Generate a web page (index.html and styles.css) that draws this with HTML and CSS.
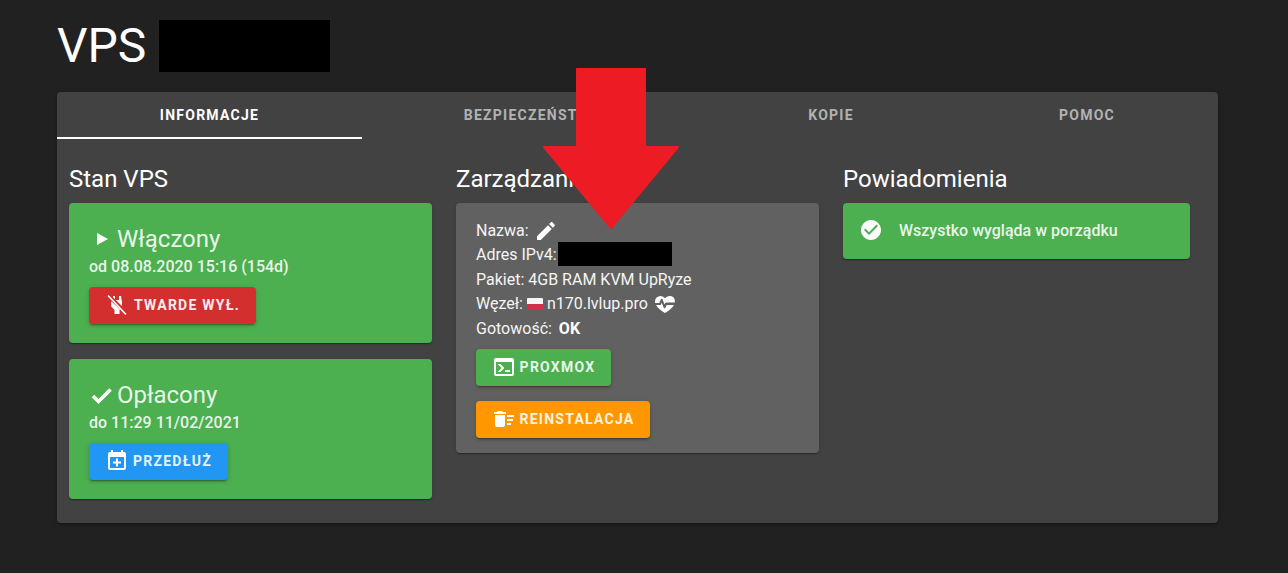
FILE: index.html
```html
<!DOCTYPE html>
<html lang="pl">
<head>
<meta charset="utf-8">
<title>VPS</title>
<link rel="stylesheet" href="styles.css">
</head>
<body>
<main class="page">
  <h1 class="title">VPS <span class="redact redact-title"></span></h1>
  <section class="panel">
    <nav class="tabs">
      <div class="tab tab-active">INFORMACJE</div>
      <div class="tab">BEZPIECZEŃSTWO</div>
      <div class="tab">KOPIE</div>
      <div class="tab">POMOC</div>
    </nav>
    <div class="columns">
      <div class="col">
        <h2 class="heading">Stan VPS</h2>
        <div class="card card-green">
          <div class="status"><svg class="status-icon" viewBox="0 0 24 24"><path d="M6 6v12l11-6z"/></svg>Włączony</div>
          <div class="sub">od 08.08.2020 15:16 (154d)</div>
          <a class="btn btn-red"><svg class="btn-icon" viewBox="0 0 24 24"><path d="M16 3h-2v4h-3.2l6.2 6.2V9zM10 3H8v1.2l2 2zM6.2 8.2V13.5L9.5 17v4h5v-4l.6-.6z"/><path d="M3 2.5 21 21.5" class="slash"/></svg>TWARDE WYŁ.</a>
        </div>
        <div class="card card-green">
          <div class="status"><svg class="status-icon" viewBox="0 0 24 24"><path d="M2 13 7.500 18.500 19.500 6.500" class="tick"/></svg>Opłacony</div>
          <div class="sub">do 11:29 11/02/2021</div>
          <a class="btn btn-blue"><svg class="btn-icon" viewBox="0 0 24 24"><path d="M19,19V8H5V19H19M16,1H18V3H19A2,2 0 0,1 21,5V19A2,2 0 0,1 19,21H5C3.89,21 3,20.1 3,19V5C3,3.89 3.89,3 5,3H6V1H8V3H16V1M11,9.5H13V12.5H16V14.5H13V17.5H11V14.5H8V12.5H11V9.5Z"/></svg>PRZEDŁUŻ</a>
        </div>
      </div>
      <div class="col">
        <h2 class="heading">Zarządzanie</h2>
        <div class="card card-grey">
          <div class="line">Nazwa: <svg class="inline-icon" viewBox="0 0 24 24"><path d="M20.71,7.04C21.1,6.65 21.1,6 20.71,5.63L18.37,3.29C18,2.9 17.35,2.9 16.96,3.29L15.12,5.12L18.87,8.87M3,17.25V21H6.75L17.81,9.93L14.06,6.18L3,17.25Z"/></svg></div>
          <div class="line">Adres IPv4:<span class="redact redact-ip"></span></div>
          <div class="line">Pakiet: 4GB RAM KVM UpRyze</div>
          <div class="line">Węzeł: <span class="flag"></span> n170.lvlup.pro <svg class="inline-icon" viewBox="0 0 24 24"><path d="M7.5 4A5.5 5.5 0 0 0 2 9.5c0 .5.1 1 .2 1.5h4.1l1.6-3.8c.3-.7 1.3-.7 1.6 0l2 5.3.7-1.5c.2-.3.5-.5.9-.5h8.600c.1-.5.2-1 .2-1.500A5.500 5.500 0 0 0 16.500 4c-1.900 0-3.400 1-4.500 2.300C10.900 5 9.400 4 7.500 4zM3.100 13c1.600 3 4.900 5.600 8.900 8 4-2.400 7.300-5 8.900-8h-7.200l-1.300 2.800c-.3.700-1.400.700-1.700 0l-2-5.400-.6 1.900c-.2.400-.5.700-.9.700z"/></svg></div>
          <div class="line">Gotowość: <b class="ok">OK</b></div>
          <a class="btn btn-green btn-first"><svg class="btn-icon" viewBox="0 0 24 24"><path d="M20,19V7H4V19H20M20,3A2,2 0 0,1 22,5V19A2,2 0 0,1 20,21H4A2,2 0 0,1 2,19V5C2,3.89 2.9,3 4,3H20M13,17V15H18V17H13M9.58,13L5.57,9H8.4L11.7,12.3C12.09,12.69 12.09,13.33 11.7,13.72L8.42,17H5.59L9.58,13Z"/></svg>PROXMOX</a>
          <a class="btn btn-orange btn-second"><svg class="btn-icon" viewBox="0 0 24 24"><path d="M15,16H19V18H15V16M15,8H22V10H15V8M15,12H21V14H15V12M3,18A2,2 0 0,0 5,20H11A2,2 0 0,0 13,18V8H3V18M14,5H11L10,4H6L5,5H2V7H14V5Z"/></svg>REINSTALACJA</a>
        </div>
      </div>
      <div class="col">
        <h2 class="heading">Powiadomienia</h2>
        <div class="alert">
          <svg class="alert-icon" viewBox="0 0 24 24"><path d="M12 2C6.5 2 2 6.5 2 12S6.5 22 12 22 22 17.5 22 12 17.5 2 12 2M10 17L5 12L6.41 10.59L10 14.17L17.59 6.58L19 8L10 17Z"/></svg>
          <span>Wszystko wygląda w porządku</span>
        </div>
      </div>
    </div>
  </section>
</main>
<svg class="arrow" viewBox="0 0 1288 573"><polygon points="577,69 645,69 645,147 678,147 611,228 544,147 577,147"/></svg>
</body>
</html>
```
FILE: styles.css
```css
* { box-sizing: border-box; }
html, body { margin: 0; height: 100%; }
body {
  background: #212121;
  color: #fff;
  font-family: Roboto, "Liberation Sans", sans-serif;
  overflow: hidden;
}
.page { padding: 20px 70px 0 57px; }
.title {
  margin: 0 0 20px;
  height: 52px;
  display: flex;
  align-items: center;
  gap: 13px;
  font-size: 48px;
  font-weight: 400;
  line-height: 52px;
}
.redact { display: inline-block; background: #000; }
.redact-title { width: 171px; height: 52px; }
.redact-ip { width: 114px; height: 24px; margin-left: 1px; margin-top: -1px; vertical-align: top; }
.panel {
  background: #424242;
  border-radius: 4px;
  height: 431px;
  box-shadow: 0 3px 1px -2px rgba(0,0,0,.2), 0 2px 2px rgba(0,0,0,.14), 0 1px 5px rgba(0,0,0,.12);
}
.tabs {
  display: grid;
  grid-template-columns: 305px 342px 254px 258px;
  height: 47px;
}
.tab {
  display: flex;
  align-items: center;
  justify-content: center;
  padding-bottom: 1px;
  font-size: 14px;
  font-weight: 700;
  letter-spacing: 1.25px;
  color: rgba(255,255,255,.6);
}
.tab-active { color: #fff; border-bottom: 2px solid #fff; padding-bottom: 0; }
.columns {
  display: grid;
  grid-template-columns: 363px 363px 347px;
  gap: 24px;
  padding: 24px 12px 0;
}
.heading {
  margin: 0 0 8px;
  font-size: 24px;
  font-weight: 400;
  line-height: 32px;
}
.card {
  border-radius: 4px;
  padding: 20px;
  box-shadow: 0 2px 1px -1px rgba(0,0,0,.2), 0 1px 1px rgba(0,0,0,.14), 0 1px 3px rgba(0,0,0,.12);
}
.card-green {
  background: #4caf50;
  color: #e8f5e9;
  height: 140px;
  margin-bottom: 16px;
}
.card-grey { background: #616161; height: 250px; padding-top: 15.500px; color: #f5f5f5; }
.status {
  display: flex;
  align-items: center;
  height: 32px;
  font-size: 24px;
}
.status-icon {
  width: 28px;
  height: 24px;
  fill: #fff;
  flex: none;
}
.tick { fill: none; stroke: #fff; stroke-width: 3.6; }
.sub {
  font-size: 16px;
  font-weight: 500;
  line-height: 24px;
  margin-bottom: 8px;
}
.btn {
  display: inline-flex;
  align-items: center;
  justify-content: center;
  gap: 4px;
  height: 37px;
  padding: 0 16px 1px;
  border-radius: 4px;
  color: #fff;
  font-size: 14px;
  font-weight: 700;
  letter-spacing: 1.25px;
  box-shadow: 0 3px 1px -2px rgba(0,0,0,.2), 0 2px 2px rgba(0,0,0,.14), 0 1px 5px rgba(0,0,0,.12);
}
.btn-red { background: #d32f2f; color: #ffebee; gap: 5px; }
.btn-blue { background: #2196f3; color: #e3f2fd; }
.btn-green { background: #4caf50; color: #e8f5e9; }
.btn-orange { background: #ff9800; color: #fff3e0; }
.btn-first { margin-top: 7.500px; display: flex; width: 135px; }
.btn-second { margin-top: 15px; display: flex; width: 174px; }
.btn-icon { width: 24px; height: 24px; fill: #fff; flex: none; }
.slash { stroke: #fff; stroke-width: 1.6; fill: none; }
.line {
  height: 24.5px;
  line-height: 24px;
  font-size: 16px;
  font-weight: 400;
  white-space: nowrap;
}
.inline-icon { width: 24px; height: 24px; fill: #fff; vertical-align: top; margin-left: 1px; }
.flag {
  display: inline-block;
  width: 16px;
  height: 12px;
  border-radius: 1px;
  vertical-align: -1px;
  background: linear-gradient(#f5f5f5 50%, #d32f4a 50%);
}
.ok { margin-left: 3px; font-weight: 700; color: #fff; }
.alert {
  display: flex;
  align-items: center;
  height: 56px;
  padding: 0 16px 2px;
  gap: 16px;
  background: #4caf50;
  color: #e8f5e9;
  border-radius: 4px;
  font-size: 16px;
  font-weight: 500;
  box-shadow: 0 2px 1px -1px rgba(0,0,0,.2), 0 1px 1px rgba(0,0,0,.14), 0 1px 3px rgba(0,0,0,.12);
}
.alert-icon { width: 24px; height: 24px; fill: #fff; flex: none; }
.arrow {
  position: absolute;
  left: 0;
  top: 0;
  width: 1288px;
  height: 573px;
  pointer-events: none;
}
.arrow polygon { fill: #ed1c24; stroke: #ed1c24; stroke-width: 2; stroke-linejoin: round; }
```
